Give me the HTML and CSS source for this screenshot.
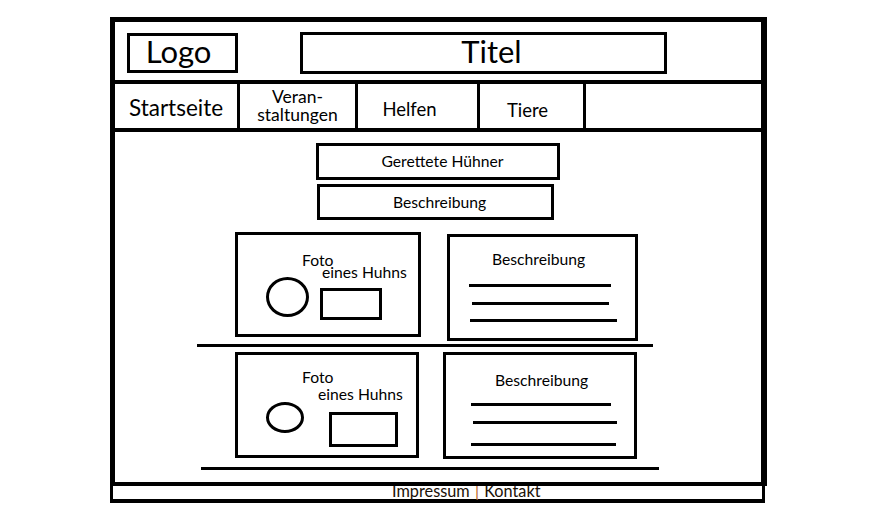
FILE: index.html
```html
<!DOCTYPE html>
<html lang="de">

<head>
    <meta charset="UTF-8">
    <meta name="viewport" content="width=device-width, initial-scale=1.0">
    <title>Gerettete Hühner - Wireframe</title>
    <link rel="stylesheet" href="styles.css">
</head>

<body>

    <div class="frame">
        <header class="top">
            <div class="logo">Logo</div>
            <div class="title">Titel</div>
        </header>

        <nav class="nav">
            <a href="#" class="nav-item nav-home">Startseite</a>
            <a href="#" class="nav-item nav-events">Veran-<br>staltungen</a>
            <a href="#" class="nav-item nav-help">Helfen</a>
            <a href="#" class="nav-item nav-animals">Tiere</a>
            <span class="nav-rest"></span>
        </nav>

        <main class="content">
            <div class="heading">Gerettete Hühner</div>
            <div class="intro">Beschreibung</div>

            <!-- Huhn 1 -->
            <section class="entry entry-one">
                <div class="photo">
                    <p class="photo-label">Foto</p>
                    <p class="photo-sub">eines Huhns</p>
                    <div class="shapes">
                        <span class="circle"></span>
                        <span class="rect"></span>
                    </div>
                </div>
                <div class="desc">
                    <p>Beschreibung</p>
                    <span class="line line-a"></span>
                    <span class="line line-b"></span>
                    <span class="line line-c"></span>
                </div>
            </section>
            <hr class="divider divider-one">

            <!-- Huhn 2 -->
            <section class="entry entry-two">
                <div class="photo">
                    <p class="photo-label">Foto</p>
                    <p class="photo-sub">eines Huhns</p>
                    <div class="shapes">
                        <span class="circle"></span>
                        <span class="rect"></span>
                    </div>
                </div>
                <div class="desc">
                    <p>Beschreibung</p>
                    <span class="line line-a"></span>
                    <span class="line line-b"></span>
                    <span class="line line-c"></span>
                </div>
            </section>
            <hr class="divider divider-two">
        </main>
    </div>

    <footer class="footer">
        <span class="footer-links">Impressum <span class="sep">|</span> Kontakt</span>
    </footer>

</body>

</html>
```

FILE: styles.css
```css
* {
    margin: 0;
    padding: 0;
    box-sizing: border-box;
}

body {
    font-family: "Lato", "Open Sans", sans-serif;
    background-color: #fff;
    color: #000;
    width: 890px;
    height: 506px;
    overflow: hidden;
}

.frame {
    position: relative;
    z-index: 1;
    margin: 17px 0 0 110px;
    width: 657px;
    height: 469px;
    border-style: solid;
    border-color: #000;
    border-width: 5px 6px 4px 5px;
    display: flex;
    flex-direction: column;
}

/* Kopfbereich */
.top {
    height: 62px;
    border-bottom: 4px solid #000;
    display: flex;
    align-items: flex-start;
}

.logo {
    margin: 11px 0 0 12px;
    width: 111px;
    height: 40px;
    border: 3px solid #000;
    font-size: 31px;
    line-height: 30px;
    text-align: center;
    padding-right: 8px;
}

.title {
    margin: 10px 0 0 62px;
    width: 367px;
    height: 42px;
    border: 3px solid #000;
    font-size: 31px;
    line-height: 32px;
    text-align: center;
    padding-left: 16px;
}

/* Navigation */
.nav {
    height: 48px;
    border-bottom: 4px solid #000;
    display: flex;
}

.nav-item {
    color: #000;
    text-decoration: none;
    text-align: center;
    border-right: 3px solid #000;
}

.nav-home {
    width: 125px;
    font-size: 22.5px;
    line-height: 26px;
    padding-top: 11px;
}

.nav-events {
    width: 118px;
    font-size: 17.5px;
    line-height: 18px;
    padding-top: 4px;
}

.nav-help {
    width: 122px;
    font-size: 18.5px;
    line-height: 22px;
    padding: 14px 16px 0 0;
}

.nav-animals {
    width: 106px;
    font-size: 18.5px;
    line-height: 22px;
    padding: 15px 8px 0 0;
}

.nav-rest {
    flex: 1;
}

/* Inhalt */
.content {
    flex: 1;
    display: flex;
    flex-direction: column;
    align-items: flex-start;
    font-size: 15.7px;
}

.heading {
    margin: 11px 0 0 201px;
    width: 244px;
    height: 37px;
    border: 3px solid #000;
    line-height: 26px;
    text-align: center;
    padding: 2px 0 0 9px;
}

.intro {
    margin: 4px 0 0 202px;
    width: 237px;
    height: 36px;
    border: 3px solid #000;
    line-height: 26px;
    text-align: center;
    padding: 2px 0 0 8px;
}

.entry {
    display: flex;
    align-items: flex-start;
}

.photo,
.desc {
    border: 3px solid #000;
}

.photo p,
.desc p {
    line-height: 12px;
}

.shapes {
    display: flex;
    align-items: flex-start;
}

.circle {
    border: 3px solid #000;
    border-radius: 50%;
}

.rect {
    border: 3px solid #000;
}

.line {
    display: block;
    height: 3px;
    background-color: #000;
}

.divider {
    border: none;
    height: 3px;
    background-color: #000;
}

/* Zeile 1 */
.entry-one {
    margin-top: 12px;
}

.entry-one .photo {
    margin-left: 120px;
    width: 186px;
    height: 105px;
    padding-top: 19px;
}

.entry-one .photo-label {
    padding-left: 64px;
}

.entry-one .photo-sub {
    padding-left: 84px;
}

.entry-one .shapes {
    padding-left: 28px;
}

.entry-one .circle {
    margin-top: -1px;
    width: 43px;
    height: 40px;
}

.entry-one .rect {
    margin: 10px 0 0 11px;
    width: 62px;
    height: 32px;
}

.entry-one .desc {
    margin: 2px 0 0 26px;
    width: 191px;
    height: 107px;
    padding-top: 16px;
}

.entry-one .desc p {
    padding-left: 42px;
}

.entry-one .line-a {
    margin: 19px 0 0 19px;
    width: 142px;
}

.entry-one .line-b {
    margin: 15px 0 0 22px;
    width: 137px;
}

.entry-one .line-c {
    margin: 14px 0 0 20px;
    width: 147px;
}

.divider-one {
    margin: 3px 0 0 82px;
    width: 456px;
}

/* Zeile 2 */
.entry-two {
    margin-top: 5px;
}

.entry-two .photo {
    margin-left: 120px;
    width: 184px;
    height: 106px;
    padding-top: 16px;
}

.entry-two .photo-label {
    padding-left: 64px;
}

.entry-two .photo-sub {
    margin-top: 5px;
    padding-left: 80px;
}

.entry-two .shapes {
    padding-left: 28px;
}

.entry-two .circle {
    margin-top: 2px;
    width: 38px;
    height: 31px;
}

.entry-two .rect {
    margin: 12px 0 0 25px;
    width: 69px;
    height: 35px;
}

.entry-two .desc {
    margin-left: 24px;
    width: 194px;
    height: 107px;
    padding-top: 19px;
}

.entry-two .desc p {
    padding-left: 49px;
}

.entry-two .line-a {
    margin: 17px 0 0 25px;
    width: 140px;
}

.entry-two .line-b {
    margin: 15px 0 0 27px;
    width: 144px;
}

.entry-two .line-c {
    margin: 19px 0 0 25px;
    width: 145px;
}

.divider-two {
    margin: 8px 0 0 86px;
    width: 458px;
}

/* Fußzeile */
.footer {
    margin-left: 110px;
    width: 655px;
    height: 17px;
    border-style: solid;
    border-color: #000;
    border-width: 0 3px 4px 3px;
    padding-left: 279px;
    font-size: 16.3px;
    line-height: 9px;
    word-spacing: 1px;
}

.footer-links {
    color: #1c1208;
}

.sep {
    color: #b8652a;
}
```
